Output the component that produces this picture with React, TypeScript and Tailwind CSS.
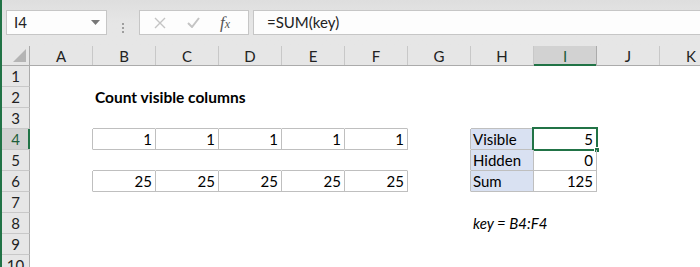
import React from "react";

const COLS = ["A", "B", "C", "D", "E", "F", "G", "H", "I", "J", "K"];
const ROWS = [1, 2, 3, 4, 5, 6, 7, 8, 9, 10];

type Cell = { v?: string; align?: "l" | "r"; bold?: boolean; italic?: boolean; fill?: boolean };

const data: Record<string, Cell> = {
  B2: { v: "Count visible columns", bold: true },
  B4: { v: "1", align: "r" },
  C4: { v: "1", align: "r" },
  D4: { v: "1", align: "r" },
  E4: { v: "1", align: "r" },
  F4: { v: "1", align: "r" },
  B6: { v: "25", align: "r" },
  C6: { v: "25", align: "r" },
  D6: { v: "25", align: "r" },
  E6: { v: "25", align: "r" },
  F6: { v: "25", align: "r" },
  H4: { v: "Visible", fill: true },
  H5: { v: "Hidden", fill: true },
  H6: { v: "Sum", fill: true },
  I4: { v: "5", align: "r" },
  I5: { v: "0", align: "r" },
  I6: { v: "125", align: "r" },
  H8: { v: "key = B4:F4", italic: true },
};

function bordered(r: number, c: number) {
  if (c < 0 || c >= COLS.length) return false;
  const col = COLS[c];
  if ((r === 4 || r === 6) && "BCDEF".includes(col)) return true;
  if (r >= 4 && r <= 6 && (col === "H" || col === "I")) return true;
  return false;
}

function SheetCell({ r, c }: { r: number; c: number }) {
  const key = COLS[c] + r;
  const cell = data[key];
  const right = bordered(r, c) || bordered(r, c + 1);
  const bottom = bordered(r, c) || bordered(r + 1, c);
  const selected = key === "I4";
  return (
    <div
      className={`relative flex h-[21px] w-[63px] shrink-0 items-center border-b border-r leading-none text-black ${
        cell?.bold ? "text-[15.5px] font-bold" : "text-[15px]"
      } ${right ? "border-r-[#bfbfbf]" : "border-r-transparent"} ${
        bottom ? "border-b-[#bfbfbf]" : "border-b-transparent"
      } ${cell?.fill ? "bg-[#d9e1f2]" : ""} ${
        cell?.align === "r" ? "justify-end pr-[3px]" : "justify-start pl-[2px]"
      } ${cell?.italic ? "italic" : ""}`}
    >
      <span className="relative z-10 whitespace-nowrap pt-[1px]">{cell?.v}</span>
      {selected && (
        <>
          <div className="absolute left-[-2px] top-[-2px] h-[24px] w-[66px] border-2 border-[#217346]" />
          <div className="absolute bottom-[-4px] right-[-4px] h-[6px] w-[6px] border border-white bg-[#217346]" />
        </>
      )}
    </div>
  );
}

function FormulaBar() {
  return (
    <div className="flex h-[46px] shrink-0 bg-gradient-to-b from-[#dedede] via-[#e6e6e6] to-[#e6e6e6] pt-[10px]">
      <div className="ml-[4px] flex h-[25px] w-[101px] items-center justify-between border border-[#c6c6c6] bg-[#fdfdfd] pl-[7px] pr-[6px] text-[15px] text-[#222]">
        <span>I4</span>
        <svg width="9" height="5" viewBox="0 0 9 5">
          <path d="M0 0h9L4.5 5z" fill="#777" />
        </svg>
      </div>
      <div className="flex w-[32px] flex-col items-center justify-center gap-[2px]">
        <div className="h-[2px] w-[2px] bg-[#9e9e9e]" />
        <div className="h-[2px] w-[2px] bg-[#9e9e9e]" />
        <div className="h-[2px] w-[2px] bg-[#9e9e9e]" />
      </div>
      <div className="flex h-[25px] w-[110px] items-center border border-[#c6c6c6] bg-[#fdfdfd]">
        <svg className="ml-[14px]" width="12" height="12" viewBox="0 0 12 12">
          <path d="M1 1l10 10M11 1L1 11" stroke="#c4c4c4" strokeWidth="1.4" />
        </svg>
        <svg className="ml-[21px]" width="13" height="11" viewBox="0 0 13 11">
          <path d="M1 6l4 4 7-9" stroke="#c4c4c4" strokeWidth="2" fill="none" />
        </svg>
        <span className="ml-[20px] font-['Liberation_Serif',serif] text-[17px] italic text-[#555]">
          f<span className="text-[12px]">x</span>
        </span>
      </div>
      <div className="ml-[4px] flex h-[25px] flex-1 items-center border-y border-l border-[#c6c6c6] bg-[#fdfdfd] pl-[13px] text-[15px] text-[#222]">
        =SUM(key)
      </div>
    </div>
  );
}

export default function App() {
  return (
    <div className="flex h-[267px] w-[700px] overflow-hidden bg-[#e6e6e6] font-['Lato',sans-serif]">
      <div className="w-[2px] shrink-0 bg-[#217346]" />
      <div className="flex min-w-0 flex-1 flex-col">
        <FormulaBar />
        <div className="flex h-[20px] shrink-0 border-b border-[#ababab] bg-[#e6e6e6]">
          <div className="flex w-[28px] shrink-0 items-end justify-end border-r border-[#ababab] pb-[3px] pr-[3px]">
            <svg width="13" height="13" viewBox="0 0 13 13">
              <path d="M13 0V13H0z" fill="#b4b4b4" />
            </svg>
          </div>
          {COLS.map((c) => (
            <div
              key={c}
              className={`relative flex w-[63px] shrink-0 items-center justify-center border-r text-[15px] ${
                c === "I"
                  ? "border-[#ababab] bg-[#d2d2d2] text-[#1e5e3a]"
                  : "border-[#c8c8c8] text-[#222]"
              }`}
            >
              <span className="pt-[2px]">{c}</span>
              {c === "I" && <div className="absolute bottom-[-1px] left-0 right-0 h-[2px] bg-[#217346]" />}
            </div>
          ))}
        </div>
        {ROWS.map((r) => (
          <div key={r} className="flex shrink-0 bg-white">
            <div
              className={`relative flex h-[21px] w-[28px] shrink-0 items-center justify-center border-b border-r border-b-[#c8c8c8] text-[15px] ${
                r === 4
                  ? "border-r-[#ababab] bg-[#d2d2d2] text-[#1e5e3a]"
                  : "border-r-[#ababab] bg-[#e6e6e6] text-[#222]"
              }`}
            >
              <span className="pt-[1px]">{r}</span>
              {r === 4 && <div className="absolute bottom-0 right-[-1px] top-0 w-[2px] bg-[#217346]" />}
            </div>
            {COLS.map((_, c) => (
              <SheetCell key={c} r={r} c={c} />
            ))}
          </div>
        ))}
      </div>
    </div>
  );
}
